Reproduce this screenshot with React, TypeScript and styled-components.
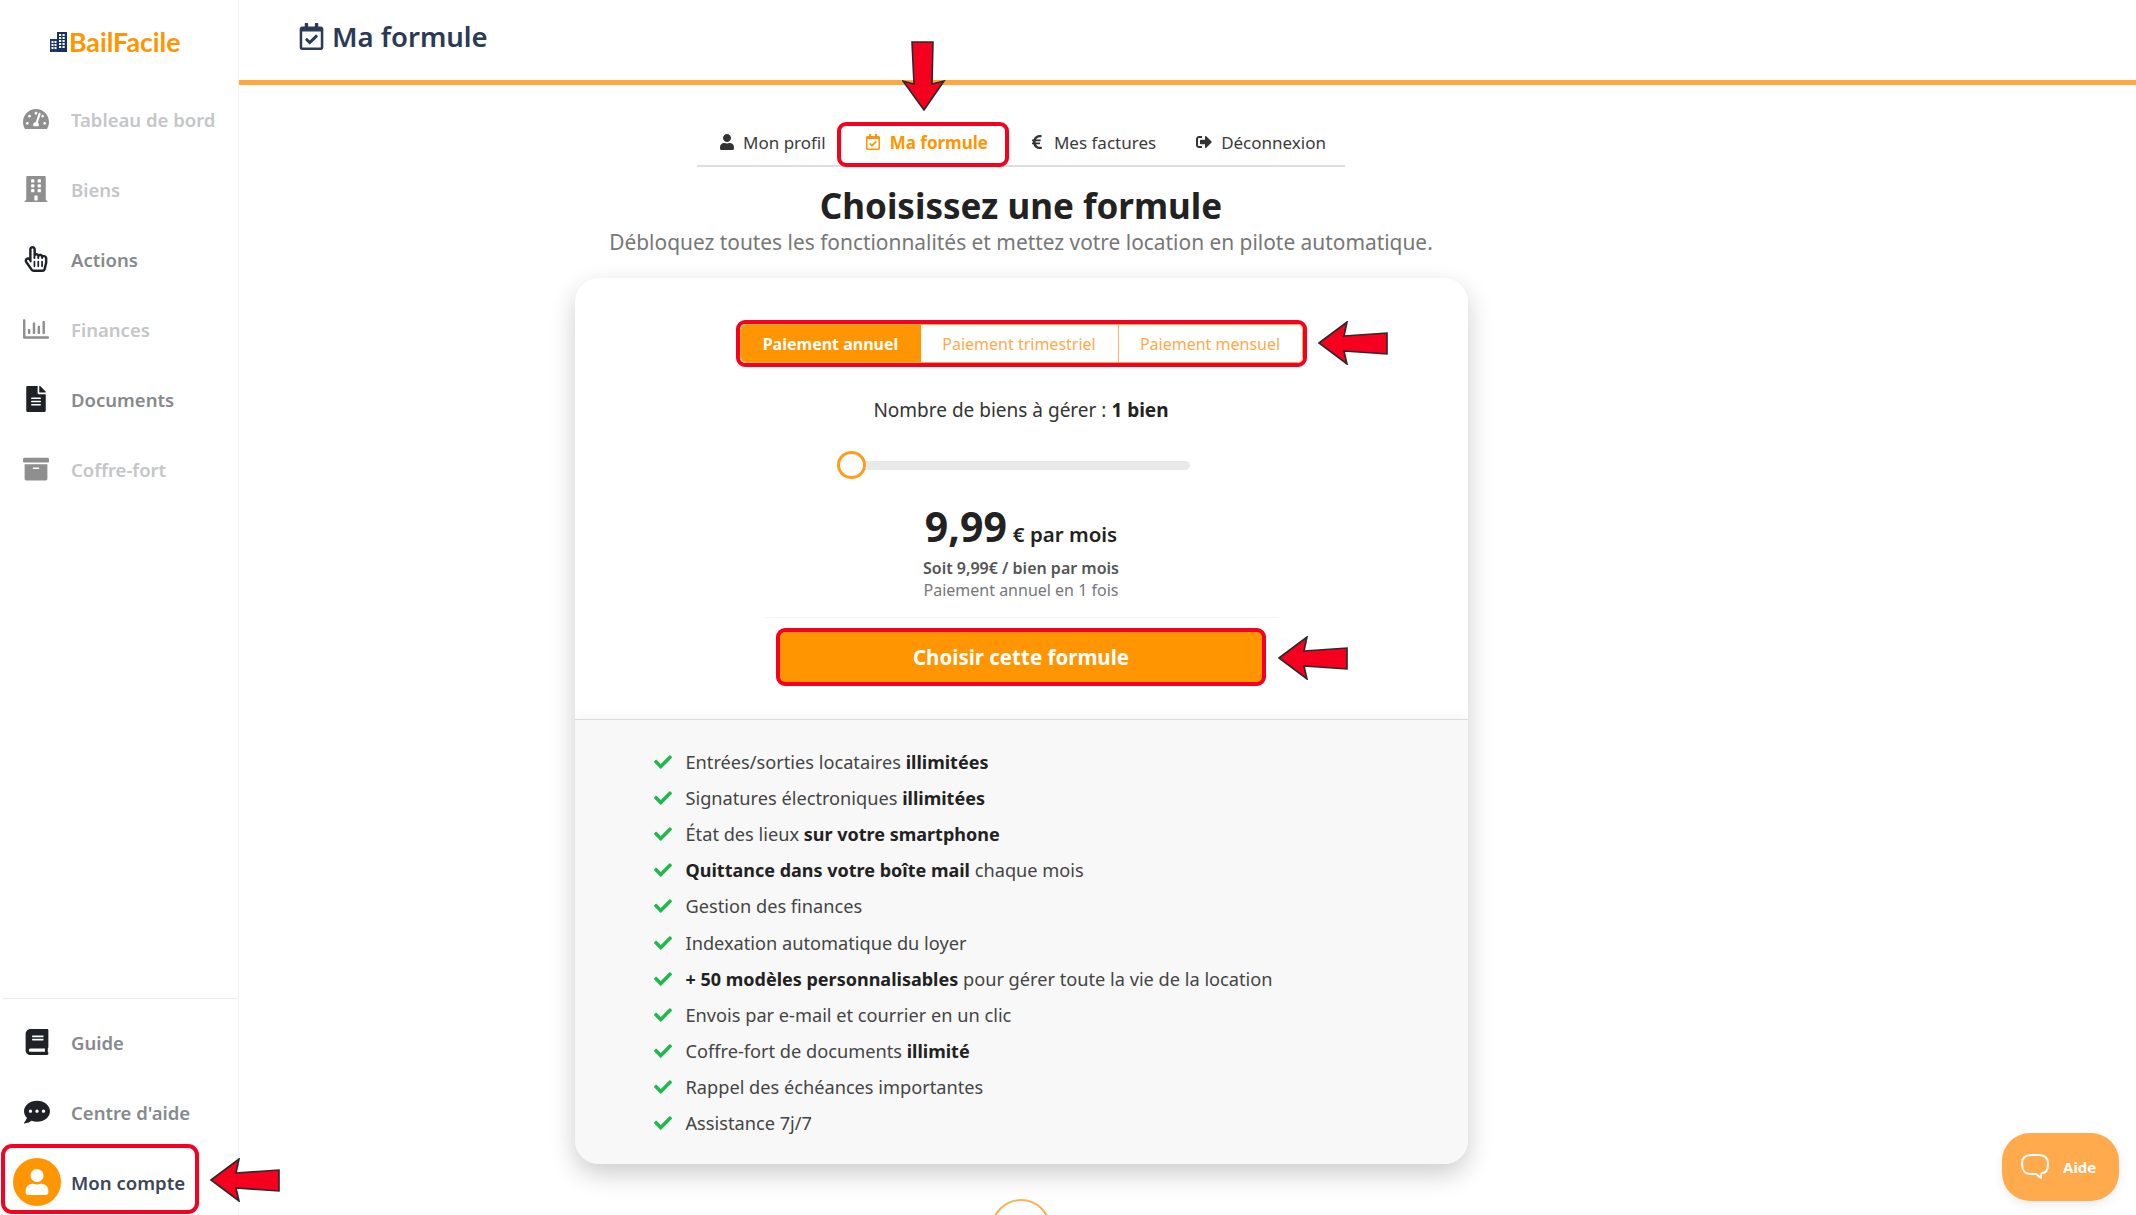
import React from "react";
import styled, { createGlobalStyle } from "styled-components";
import {
  FaTachometerAlt,
  FaBuilding,
  FaRegHandPointer,
  FaFileAlt,
  FaArchive,
  FaBook,
  FaCommentDots,
  FaUser,
  FaEuroSign,
  FaSignOutAlt,
  FaRegCalendarCheck,
  FaCheck,
  FaRegChartBar,
} from "react-icons/fa";

const Global = createGlobalStyle`
  html, body { margin: 0; padding: 0; height: 100%; overflow: hidden; background: #fff; }
  body { font-family: "Noto Sans", "Open Sans", sans-serif; color: #222; }
  * { box-sizing: border-box; }
`;

const Page = styled.div`
  position: relative;
  display: flex;
  width: 2136px;
  height: 1215px;
  overflow: hidden;
`;

const Sidebar = styled.aside`
  flex: 0 0 239px;
  display: flex;
  flex-direction: column;
  border-right: 1px solid #f2f2f2;
`;

const Logo = styled.div`
  height: 84px;
  padding: 28px 0 0 50px;
  display: flex;
  align-items: flex-start;
  gap: 2px;
  font-family: "Lato", sans-serif;
  font-weight: 700;
  font-size: 26.7px;
  line-height: 28px;
  color: #ff9500;
  svg { margin-top: 4px; }
`;

const NavList = styled.nav`
  display: flex;
  flex-direction: column;
`;

const BottomNav = styled(NavList)`
  margin-top: auto;
  margin-left: 3px;
  padding-top: 8px;
  padding-bottom: 1px;
  border-top: 1px solid #ececec;
`;

const NavItem = styled.div<{ $tone: "off" | "on" }>`
  height: 70px;
  display: flex;
  align-items: center;
  font-size: 18.5px;
  font-weight: 600;
  color: ${(p) => (p.$tone === "on" ? "#868a8e" : "#c4c6c8")};
`;

const NavIcon = styled.span<{ $tone: "off" | "on" }>`
  flex: 0 0 71px;
  display: flex;
  justify-content: center;
  padding-right: 0;
  width: 71px;
  font-size: 26px;
  color: ${(p) => (p.$tone === "on" ? "#1e2226" : "#8f8f8f")};
`;

const BottomIcon = styled(NavIcon)`
  flex-basis: 68px;
  width: 68px;
`;

const AccountItem = styled.div`
  width: 198px;
  height: 70px;
  margin: -3px 0 0 -2px;
  padding-top: 6px;
  display: flex;
  align-items: center;
  border: 4px solid #f5001e;
  border-radius: 11px;
  font-size: 18.6px;
  font-weight: 600;
  color: #3a4657;
`;

const Avatar = styled.span`
  width: 48px;
  height: 48px;
  margin: -1px 10px 0 8px;
  border-radius: 50%;
  background: #ff9500;
  color: #fff;
  display: flex;
  align-items: center;
  justify-content: center;
  font-size: 26px;
`;

const Main = styled.main`
  flex: 1;
  display: flex;
  flex-direction: column;
`;

const Header = styled.header`
  height: 85px;
  flex: 0 0 85px;
  padding: 0 0 8px 59px;
  border-bottom: 5px solid #ffa83d;
  display: flex;
  align-items: center;
  gap: 7px;
  font-size: 27.5px;
  font-weight: 600;
  color: #2b3a55;
  svg { font-size: 27px; }
`;

const Content = styled.div`
  width: 1564px;
  display: flex;
  flex-direction: column;
  align-items: center;
`;

const Tabs = styled.div`
  width: 648px;
  height: 45px;
  margin-top: 37px;
  padding-left: 22px;
  display: flex;
  align-items: center;
  border-bottom: 2px solid #dedede;
  font-size: 17px;
  color: #3b3b3b;
`;

const Tab = styled.div<{ $before: number; $gap: number }>`
  display: flex;
  align-items: center;
  gap: ${(p) => p.$gap}px;
  padding-bottom: 3px;
  margin-left: ${(p) => p.$before}px;
  white-space: nowrap;
  svg { font-size: 16px; color: #333; }
`;

const ActiveTab = styled(Tab)`
  align-self: flex-start;
  height: 45px;
  padding: 0 17px 5px 24px;
  border: 4px solid #f5001e;
  border-radius: 9px;
  background: #fff;
  color: #ff9500;
  font-weight: 700;
  svg { color: #ff9500; }
`;

const Title = styled.h1`
  margin: 15px 0 0;
  font-size: 35px;
  line-height: 48px;
  font-weight: 700;
  color: #222;
`;

const Subtitle = styled.p`
  margin: -3px 0 0;
  font-size: 20.9px;
  line-height: 30px;
  color: #777;
`;

const Card = styled.section`
  width: 893px;
  height: 886px;
  margin-top: 21px;
  display: flex;
  flex-direction: column;
  border-radius: 24px;
  background: #fff;
  box-shadow: 0 10px 26px rgba(0, 0, 0, 0.2);
  overflow: hidden;
`;

const Pricing = styled.div`
  flex: 0 0 441px;
  padding-top: 42px;
  display: flex;
  flex-direction: column;
  align-items: center;
`;

const Segments = styled.div`
  width: 571px;
  height: 47px;
  border: 4px solid #f5001e;
  border-radius: 9px;
`;

const SegmentTrack = styled.div`
  height: 100%;
  display: flex;
  border: 1px solid #ffa94d;
  border-radius: 6px;
  overflow: hidden;
`;

const Segment = styled.div<{ $active?: boolean; $width: number }>`
  flex: 0 0 ${(p) => p.$width}px;
  display: flex;
  align-items: center;
  justify-content: center;
  font-size: 16px;
  font-weight: ${(p) => (p.$active ? 700 : 400)};
  color: ${(p) => (p.$active ? "#fff" : "#ffa94d")};
  background: ${(p) => (p.$active ? "#ff9500" : "#fff")};
`;

const SegmentDivided = styled(Segment)`
  border-right: 1px solid #ffb469;
`;

const CountLabel = styled.div`
  margin-top: 30px;
  font-size: 19px;
  line-height: 26px;
  color: #333;
  b { font-weight: 700; color: #222; }
`;

const Slider = styled.div`
  position: relative;
  width: 353px;
  height: 28px;
  margin: 28px 15px 0 0;
  display: flex;
  align-items: center;
`;

const Track = styled.div`
  width: 100%;
  height: 9px;
  border-radius: 5px;
  background: #e9e9e9;
`;

const Thumb = styled.div`
  position: absolute;
  left: 0;
  top: 0;
  width: 29px;
  height: 28px;
  border: 3px solid #ff9d1f;
  border-radius: 50%;
  background: #fff;
`;

const Price = styled.div`
  height: 56px;
  margin-top: 19px;
  line-height: 56px;
  font-size: 20.5px;
  font-weight: 600;
  color: #222;
  strong { font-size: 41px; font-weight: 700; margin-right: 6px; }
`;

const PerUnit = styled.div`
  margin-top: 3px;
  font-size: 16px;
  line-height: 22px;
  font-weight: 600;
  color: #555;
`;

const Instalment = styled.div`
  font-size: 16px;
  line-height: 22px;
  color: #777;
`;

const Hairline = styled.div`
  width: 515px;
  height: 1px;
  margin-top: 16px;
  background: #f5f5f5;
`;

const ChooseButton = styled.button`
  width: 490px;
  height: 58px;
  margin-top: 10px;
  border: 4px solid #f5001e;
  border-radius: 9px;
  background: #ff9500;
  color: #fff;
  font-family: inherit;
  font-size: 20.5px;
  font-weight: 700;
`;

const Features = styled.ul`
  flex: 1;
  margin: 0;
  padding: 23.5px 0 0 79px;
  list-style: none;
  background: #f8f8f8;
  border-top: 1px solid #dcdcdc;
  box-shadow: 0 -4px 10px rgba(0, 0, 0, 0.04);
`;

const Feature = styled.li`
  height: 36.2px;
  display: flex;
  align-items: center;
  gap: 14px;
  font-size: 18.2px;
  color: #444;
  white-space: pre;
  svg { flex: 0 0 18px; font-size: 18px; color: #22b84f; }
  b { font-size: 18px; font-weight: 700; color: #222; }
`;

const Bubble = styled.div`
  flex: 0 0 60px;
  width: 60px;
  height: 60px;
  margin-top: 35px;
  border: 2px solid #ffae55;
  border-radius: 50%;
`;

const HelpButton = styled.div`
  position: absolute;
  right: 17px;
  bottom: 14px;
  width: 117px;
  height: 68px;
  padding-left: 18px;
  display: flex;
  align-items: center;
  gap: 13px;
  border-radius: 28px;
  background: #ffaa4d;
  color: #fff;
  font-size: 15px;
  font-weight: 700;
  box-shadow: 0 4px 10px rgba(0, 0, 0, 0.08);
`;

const Pointer = styled.svg<{ $x: number; $y: number }>`
  position: absolute;
  left: ${(p) => p.$x}px;
  top: ${(p) => p.$y}px;
`;

const LeftArrow = ({ x, y }: { x: number; y: number }) => (
  <Pointer $x={x} $y={y} width="70" height="44" viewBox="0 0 70 44">
    <polygon
      points="1,22 29,1 26,15 69,12 69,33 26,30 29,43"
      fill="#f5001e"
      stroke="#2a2a2a"
      strokeWidth="1.6"
      strokeLinejoin="miter"
    />
  </Pointer>
);

const DownArrow = ({ x, y }: { x: number; y: number }) => (
  <Pointer $x={x} $y={y} width="44" height="70" viewBox="0 0 44 70">
    <polygon
      points="22,69 1,40 12,43 10,1 31,1 30,43 42,40"
      fill="#f5001e"
      stroke="#2a2a2a"
      strokeWidth="1.6"
    />
  </Pointer>
);

const LogoMark = () => (
  <svg width="17" height="20" viewBox="0 0 17 20">
    <rect x="0" y="7" width="8" height="13" fill="#1d3a70" />
    <rect x="7" y="0" width="10" height="20" fill="#17305f" />
    {[9, 12, 15].map((y) =>
      [1.5, 4.5].map((x) => <rect key={`a${x}-${y}`} x={x} y={y} width="2" height="2" fill="#fff" />)
    )}
    {[2, 5, 8, 11, 14].map((y) =>
      [9, 12.5].map((x) => <rect key={`b${x}-${y}`} x={x} y={y} width="2.2" height="2" fill="#fff" />)
    )}
  </svg>
);

const ChatOutline = () => (
  <svg width="30" height="28" viewBox="0 0 30 28" fill="none" stroke="#fff" strokeWidth="2">
    <path d="M11 2h8c6 0 9 3 9 9s-2 9-6 9c-1 0-1 2-1 5l-5-4h-6C5 21 2 17 2 11s3-9 9-9z" strokeLinejoin="round" />
  </svg>
);

const mainNav = [
  { label: "Tableau de bord", icon: <FaTachometerAlt />, tone: "off" as const },
  { label: "Biens", icon: <FaBuilding />, tone: "off" as const },
  { label: "Actions", icon: <FaRegHandPointer />, tone: "on" as const },
  { label: "Finances", icon: <FaRegChartBar />, tone: "off" as const },
  { label: "Documents", icon: <FaFileAlt />, tone: "on" as const },
  { label: "Coffre-fort", icon: <FaArchive />, tone: "off" as const },
];

const features: React.ReactNode[] = [
  <>Entrées/sorties locataires <b>illimitées</b></>,
  <>Signatures électroniques <b>illimitées</b></>,
  <>État des lieux <b>sur votre smartphone</b></>,
  <><b>Quittance dans votre boîte mail</b> chaque mois</>,
  <>Gestion des finances</>,
  <>Indexation automatique du loyer</>,
  <><b>+ 50 modèles personnalisables</b> pour gérer toute la vie de la location</>,
  <>Envois par e-mail et courrier en un clic</>,
  <>Coffre-fort de documents <b>illimité</b></>,
  <>Rappel des échéances importantes</>,
  <>Assistance 7j/7</>,
];

export default function App() {
  return (
    <Page>
      <Global />
      <Sidebar>
        <Logo>
          <LogoMark />
          BailFacile
        </Logo>
        <NavList>
          {mainNav.map((n) => (
            <NavItem key={n.label} $tone={n.tone}>
              <NavIcon $tone={n.tone}>{n.icon}</NavIcon>
              {n.label}
            </NavItem>
          ))}
        </NavList>
        <BottomNav>
          <NavItem $tone="on">
            <BottomIcon $tone="on"><FaBook /></BottomIcon>
            Guide
          </NavItem>
          <NavItem $tone="on">
            <BottomIcon $tone="on"><FaCommentDots /></BottomIcon>
            Centre d'aide
          </NavItem>
          <AccountItem>
            <Avatar><FaUser /></Avatar>
            Mon compte
          </AccountItem>
        </BottomNav>
      </Sidebar>
      <Main>
        <Header>
          <FaRegCalendarCheck />
          Ma formule
        </Header>
        <Content>
          <Tabs>
            <Tab $before={0} $gap={8}><FaUser />Mon profil</Tab>
            <ActiveTab $before={11} $gap={9}><FaRegCalendarCheck />Ma formule</ActiveTab>
            <Tab $before={20} $gap={9}><FaEuroSign />Mes factures</Tab>
            <Tab $before={40} $gap={9}><FaSignOutAlt />Déconnexion</Tab>
          </Tabs>
          <Title>Choisissez une formule</Title>
          <Subtitle>Débloquez toutes les fonctionnalités et mettez votre location en pilote automatique.</Subtitle>
          <Card>
            <Pricing>
              <Segments>
                <SegmentTrack>
                  <Segment $active $width={180}>Paiement annuel</Segment>
                  <SegmentDivided $width={198}>Paiement trimestriel</SegmentDivided>
                  <Segment $width={183}>Paiement mensuel</Segment>
                </SegmentTrack>
              </Segments>
              <CountLabel>Nombre de biens à gérer : <b>1 bien</b></CountLabel>
              <Slider>
                <Track />
                <Thumb />
              </Slider>
              <Price><strong>9,99</strong>€ par mois</Price>
              <PerUnit>Soit 9,99€ / bien par mois</PerUnit>
              <Instalment>Paiement annuel en 1 fois</Instalment>
              <Hairline />
              <ChooseButton>Choisir cette formule</ChooseButton>
            </Pricing>
            <Features>
              {features.map((f, i) => (
                <Feature key={i}><FaCheck /><span>{f}</span></Feature>
              ))}
            </Features>
          </Card>
          <Bubble />
        </Content>
      </Main>
      <DownArrow x={902} y={41} />
      <LeftArrow x={1318} y={321} />
      <LeftArrow x={1278} y={636} />
      <LeftArrow x={210} y={1158} />
      <HelpButton><ChatOutline />Aide</HelpButton>
    </Page>
  );
}
